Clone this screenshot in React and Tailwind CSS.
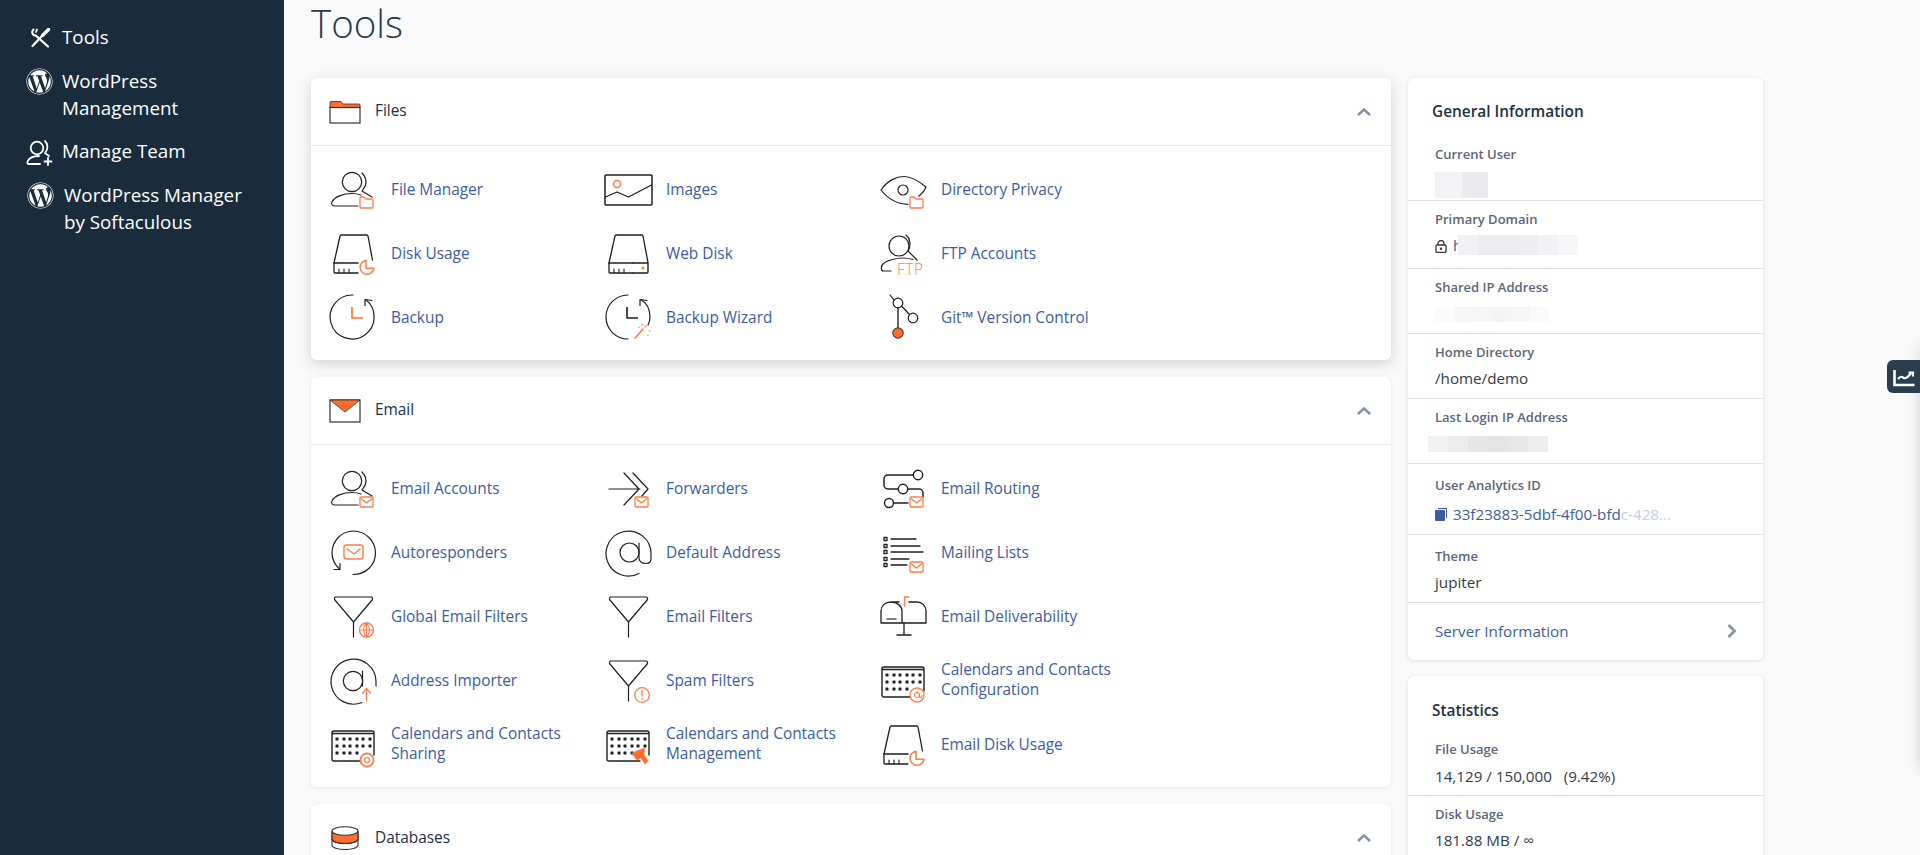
import React from "react";
import { FaWordpress } from "react-icons/fa";

const K = "#1f1f1f";
const O = "#ff7b47";
const S = "#ff6c2c";

const Ico = ({ children }) => (
  <svg viewBox="0 0 48 48" className="w-[48px] h-[48px] shrink-0 overflow-visible" fill="none" stroke={K} strokeWidth="1.2" strokeLinecap="round" strokeLinejoin="round">
    {children}
  </svg>
);

const Env = ({ x = 31, y = 32, w = 13, h = 10 }) => (
  <g stroke={O} strokeWidth="1.3">
    <rect x={x} y={y} width={w} height={h} rx="1.2" fill="#fff" />
    <path d={`M${x + 1.5} ${y + 2}l${w / 2 - 1.5} ${h / 2 - 1}l${w / 2 - 1.5} ${-(h / 2 - 1)}`} />
  </g>
);
const SmallFolder = ({ x = 31, y = 32 }) => (
  <path d={`M${x} ${y + 9}v-9a1 1 0 0 1 1-1h3l2 2h6a1 1 0 0 1 1 1v7a1 1 0 0 1-1 1h-11a1 1 0 0 1-1-1z`} stroke={O} strokeWidth="1.3" fill="#fff" />
);
const Person = () => (
  <g>
    <circle cx="23" cy="16" r="9.700" />
    <path d="M33 7c3.500 3.500 4.500 8.500 3.500 12-.5 2-2 3.500-3.500 6l10 6" />
    <path d="M29 40H6c-3 0-4-2-3-4 2-5 11-8.500 20-8.500 3 0 6 .4 9 1.500" />
  </g>
);
const Disk = ({ pie }) => (
  <g>
    <path d="M12 5h26l1 1 4.500 24M12 5l-1 1-6 27v9a1 1 0 0 0 1 1h23" strokeWidth="1.300" />
    <path d="M5 33h24" strokeWidth="1.500" />
    <path d="M10 43v-4M15 43v-4M20 43v-4" strokeWidth="1.100" />
    {pie ? (
      <path d="M37 30.300a7 7 0 1 0 8 8h-8z" fill="#fff" stroke={O} strokeWidth="1.500" />
    ) : (
      <g>
        <path d="M29 33h15v9a1 1 0 0 1-1 1H29M43.500 30l.5 3" strokeWidth="1.400" />
        <circle cx="39" cy="38" r="1.500" fill={O} stroke="none" />
      </g>
    )}
  </g>
);
const At = () => (
  <g>
    <path d="M35 44.500A22.500 22.500 0 1 1 47 23.500v6c0 3-2 5-5 5-4 0-7-2-7-6V14" />
    <circle cx="25.500" cy="23.500" r="9.500" />
  </g>
);
const Filter = () => <path d="M5.500 6.500a2 2 0 0 1 1-2.500h36a2 2 0 0 1 1 2.500L24.500 29l-19-22.500M24.500 29v15" />;
const Calendar = () => (
  <g>
    <path d="M3 12.500h42M5 10h38a2 2 0 0 1 2 2v22M36 40H5a2 2 0 0 1-2-2V12a2 2 0 0 1 2-2" strokeWidth="1.400" />
    {[18, 25, 32].map((y, r) =>
      [8, 15, 21, 28, 34, 41].slice(0, r === 2 ? 4 : 6).map((x) => <rect key={x + "-" + y} x={x - 1.500} y={y - 1.500} width="3" height="3" rx=".6" fill={K} stroke="none" />)
    )}
  </g>
);

const Icons = {
  file: () => <Ico><Person /><SmallFolder /></Ico>,
  images: () => (
    <Ico>
      <rect x="1" y="9" width="47" height="30" rx="1" strokeWidth="1.500" />
      <circle cx="13" cy="18" r="3.500" stroke={O} strokeWidth="1.500" />
      <path d="M1.500 31l11.500-5 11.500 5 23-12" strokeWidth="1.300" />
    </Ico>
  ),
  eye: () => (
    <Ico>
      <path d="M2 24C8 15 17 10.500 25 10.500S41 16 47 21M2 24c7 9 15 14 27 14.300M47 21l-2 4-5 5" />
      <circle cx="24" cy="24" r="5" />
      <SmallFolder x={31} y={32} />
    </Ico>
  ),
  disk: () => <Ico><Disk pie /></Ico>,
  webdisk: () => <Ico><Disk /></Ico>,
  ftp: () => (
    <Ico>
      <circle cx="20" cy="16" r="10" />
      <path d="M27 5c4 3 5.500 10 2 16l9 9" />
      <path d="M12 41H4.500C1.500 41 2 36 4 34c4-4 14-6 20-6 3.500 0 7 .5 10 1.500" />
      <text x="18" y="45" fontFamily="'Open Sans', sans-serif" fontWeight="300" fontSize="15.500" fill={O} stroke="none" letterSpacing=".5">FTP</text>
    </Ico>
  ),
  backup: () => (
    <Ico>
      <path d="M24 1A22 22 0 1 0 36.500 5.500" />
      <path d="M36 11.500V5.500l7 1" />
      <path d="M23 13v11h11" stroke={S} strokeWidth="1.600" strokeLinecap="butt" />
    </Ico>
  ),
  wizard: () => (
    <Ico>
      <path d="M24 1A22 22 0 0 0 24 45" />
      <path d="M36.500 5.500C43 9 46 15 46 23c0 3-.7 5.500-2 8" />
      <path d="M36 11.500V5.500l7 1" />
      <path d="M23 13v11h11" strokeWidth="1.600" strokeLinecap="butt" />
      <path d="M31 44l8-9" stroke={O} strokeWidth="1.600" />
      <path d="M41 33l1-1M38 30v1M45 37h1M44 41v.5M35 33v.5" stroke={O} strokeWidth="1.200" />
    </Ico>
  ),
  git: () => (
    <Ico>
      <path d="M11 1l4 5M22.500 12l8 8.500" />
      <path d="M19 14v20" stroke="#555" strokeWidth="1.800" />
      <circle cx="19" cy="9" r="4.800" />
      <circle cx="34" cy="24" r="4.800" />
      <circle cx="19" cy="39" r="5.200" fill={S} stroke="#444" />
    </Ico>
  ),
  accounts: () => <Ico><Person /><Env /></Ico>,
  forward: () => (
    <Ico>
      <path d="M5 24h31M20 8l15 16-15 16M29 8l15 16-6 7" />
      <Env />
    </Ico>
  ),
  routing: () => (
    <Ico>
      <path d="M34 10H9a4 4 0 0 0-4 4v6a4 4 0 0 0 4 4h10M29 24h11a4 4 0 0 1 4 4v4" strokeWidth="1.500" />
      <circle cx="39" cy="10" r="4.700" strokeWidth="1.400" />
      <circle cx="24" cy="24" r="4.700" strokeWidth="1.400" />
      <circle cx="10" cy="38" r="4.500" strokeWidth="1.400" />
      <path d="M14.500 38H29" strokeWidth="1.400" />
      <Env />
    </Ico>
  ),
  auto: () => (
    <Ico>
      <path d="M10.500 40C5.500 35.500 3 30 3 24 3 12 12.500 2 24.500 2S46.500 12 46.500 24 37 45.500 24 45.500" />
      <path d="M11 34.500v6H5" />
      <rect x="15" y="16" width="19" height="14" rx="2.500" stroke={O} strokeWidth="1.400" />
      <path d="M18 20l7 5 6-5" stroke={O} strokeWidth="1.400" />
    </Ico>
  ),
  at: () => <Ico><At /></Ico>,
  lists: () => (
    <Ico>
      {[10, 17, 23, 30, 36].map((y) => <rect key={y} x="5" y={y - 1.500} width="3" height="3" strokeWidth="1.300" />)}
      <path d="M12 10h25M12 17h29M12 23h32M12 30h18M12 36h16" strokeWidth="1.300" />
      <Env y={33} />
    </Ico>
  ),
  globalfilter: () => (
    <Ico>
      <Filter />
      <circle cx="37.500" cy="37" r="7" stroke={O} strokeWidth="1.300" fill="#fff" />
      <path d="M30.500 37h14M37.500 30v14M37.500 30c-4 4-4 10 0 14M37.500 30c4 4 4 10 0 14" stroke={O} strokeWidth="1.100" />
    </Ico>
  ),
  filter: () => <Ico><Filter /></Ico>,
  deliver: () => (
    <Ico>
      <path d="M2 30V18c0-5 4-9 10-9 6 0 11 4 11 9v12M2 30h45V18c0-5-4-9-9-9h-8M12 9h8" strokeWidth="1.300" />
      <path d="M8 26h9" stroke="#555" strokeWidth="1.500" />
      <path d="M25 30v12M18 42h14" strokeWidth="1.300" />
      <path d="M25.500 13V4h4" stroke={O} strokeWidth="1.400" />
    </Ico>
  ),
  calcfg: () => (
    <Ico>
      <Calendar />
      <circle cx="38" cy="38" r="7" stroke={O} strokeWidth="1.300" fill="#fff" />
      <path d="M40.500 38a2.500 2.500 0 1 1 0-.1v1.500c0 1.500 2.500 1.500 2.500-1" stroke={O} strokeWidth="1.100" />
    </Ico>
  ),
  importer: () => (
    <Ico>
      <path d="M33 45.500A22.500 22.500 0 1 1 47 24v5" />
      <circle cx="24" cy="24" r="9.700" />
      <path d="M33.500 14v15" />
      <path d="M37.500 44V32M33.500 36l4-4.500 4 4.500" stroke={O} strokeWidth="1.200" />
    </Ico>
  ),
  spam: () => (
    <Ico>
      <Filter />
      <circle cx="38" cy="38" r="7.300" stroke={O} strokeWidth="1.300" fill="#fff" />
      <path d="M38 33.500v5.500M38 41.500v.8" stroke={O} strokeWidth="1.300" />
    </Ico>
  ),
  calshare: () => (
    <Ico>
      <Calendar />
      <circle cx="38" cy="39" r="6.500" stroke={O} strokeWidth="1.800" strokeDasharray="3 1.200" fill="#fff" />
      <circle cx="38" cy="39" r="2.500" stroke={O} strokeWidth="1.200" />
    </Ico>
  ),
  calman: () => (
    <Ico>
      <Calendar />
      <path d="M28 32l12.500-5-.5 7 4 6-3 3-4-6-4 2z" fill={S} stroke={S} strokeWidth=".6" />
    </Ico>
  ),
};

const HeadFolder = () => (
  <svg viewBox="0 0 32 24" className="w-[32px] h-[24px]" fill="none">
    <path d="M1 5V2.500a1 1 0 0 1 1-1h10l2 2.500h16a1 1 0 0 1 1 1V8H1z" fill={S} stroke="#333" strokeWidth=".8" />
    <rect x="1" y="7.500" width="30" height="15.500" fill="#fff" stroke="#333" strokeWidth="1.200" />
  </svg>
);
const HeadMail = () => (
  <svg viewBox="0 0 32 24" className="w-[32px] h-[24px]" fill="none">
    <rect x="1" y="1" width="30" height="22" fill="#fff" stroke="#333" strokeWidth="1.200" />
    <path d="M1 1h30L16 13z" fill={S} stroke="#333" strokeWidth=".8" />
  </svg>
);
const HeadDb = () => (
  <svg viewBox="0 0 32 24" className="w-[32px] h-[24px]" fill="none" stroke="#333" strokeWidth="1.100">
    <path d="M3 5v14c0 2.500 5.500 4.500 13 4.500S29 21.500 29 19V5" fill="#fff" />
    <path d="M3 7v6c0 2.500 5.500 4.500 13 4.500S29 15.500 29 13V7z" fill={S} />
    <path d="M3 13c0 2.500 5.500 4.500 13 4.500S29 15.500 29 13" />
    <ellipse cx="16" cy="5" rx="13" ry="4.300" fill="#fff" />
  </svg>
);

const Item = ({ icon, label }) => {
  const I = Icons[icon];
  const two = label.length > 24;
  return (
    <a className="flex items-center h-[64px] w-[275px] gap-[14px]">
      <I />
      <span className={`text-[15.400px] leading-[20px] text-[#3d5da3] w-[200px] ${two ? "mb-[2px]" : ""}`}>{label}</span>
    </a>
  );
};

const Card = ({ head, title, items, big }) => (
  <section className={`bg-white rounded-[6px] ${big ? "shadow-[0_4px_14px_rgba(60,75,95,0.22)]" : "shadow-[0_1px_4px_rgba(60,75,95,0.1)]"}`}>
    <header className={`h-[68px] flex items-center pl-[18px] pr-[20px] ${items ? "border-b border-[#e6eaef]" : ""}`}>
      <span className="w-[46px]">{head}</span>
      <h2 className="text-[15.400px] text-[#1b3148] font-normal flex-1 mb-[1px]">{title}</h2>
      <svg viewBox="0 0 14 8" className="w-[14px] h-[8px]" fill="none" stroke="#8391a6" strokeWidth="2.400"><path d="M1 7l6-5.500L13 7" /></svg>
    </header>
    {items && (
      <div className="grid grid-cols-[275px_275px_275px] pl-[18px] pt-[12px] pb-[10px]">
        {items.map((it) => <Item key={it[1]} icon={it[0]} label={it[1]} />)}
      </div>
    )}
  </section>
);

const Row = ({ label, h, pt = 8, children }) => (
  <div className="px-[27px] border-b border-[#e0e1e6]" style={{ height: h, paddingTop: pt }}>
    <div className="text-[13px] font-semibold leading-[20px] text-[#5c6679]">{label}</div>
    <div className="text-[15.200px] leading-[20px] mt-[6px] text-[#333c48] whitespace-nowrap">{children}</div>
  </div>
);

const Blur = ({ h, tones, cell = 20, ml = 0 }) => (
  <div className="flex" style={{ height: h, marginLeft: ml }}>
    {tones.map((c, i) => <div key={i} style={{ width: cell, backgroundColor: c }} />)}
  </div>
);

const files = [["file", "File Manager"], ["images", "Images"], ["eye", "Directory Privacy"], ["disk", "Disk Usage"], ["webdisk", "Web Disk"], ["ftp", "FTP Accounts"], ["backup", "Backup"], ["wizard", "Backup Wizard"], ["git", "Git™ Version Control"]];
const email = [["accounts", "Email Accounts"], ["forward", "Forwarders"], ["routing", "Email Routing"], ["auto", "Autoresponders"], ["at", "Default Address"], ["lists", "Mailing Lists"], ["globalfilter", "Global Email Filters"], ["filter", "Email Filters"], ["deliver", "Email Deliverability"], ["importer", "Address Importer"], ["spam", "Spam Filters"], ["calcfg", "Calendars and Contacts Configuration"], ["calshare", "Calendars and Contacts Sharing"], ["calman", "Calendars and Contacts Management"], ["disk", "Email Disk Usage"]];

const SideItem = ({ icon, children, ml = 0, gap }) => (
  <div className="flex items-start text-[18.800px] leading-[26.500px] text-white" style={{ marginLeft: ml, gap }}>
    <span className="w-[27px] h-[27px] shrink-0 flex items-center justify-center">{icon}</span>
    <span>{children}</span>
  </div>
);

export default function App() {
  return (
    <div className="relative flex h-[855px] overflow-hidden bg-[#fafafa] font-['Open_Sans',sans-serif]">
      <aside className="w-[284px] shrink-0 bg-[#1a2c3b] pt-[24px] pl-[26px] flex flex-col gap-[17px]">
        <SideItem gap={9} icon={
          <svg viewBox="0 0 20 20" className="w-[20px] h-[20px] ml-[3px]" fill="none" stroke="#fff" strokeWidth="2" strokeLinecap="round" strokeLinejoin="round">
            <path d="M1.500 18L11 8" strokeWidth="2.200" />
            <path d="M12 7l5.500-5.500" strokeWidth="3.400" />
            <path d="M2.500 1.500c-2 2-1.500 5 1 6l1-.2L17 18.500" strokeWidth="2.200" />
            <path d="M6 1.500L5 4" strokeWidth="1.800" />
          </svg>
        }>Tools</SideItem>
        <SideItem gap={9} icon={<FaWordpress className="text-[27px]" />}>WordPress<br />Management</SideItem>
        <SideItem gap={9} icon={
          <svg viewBox="0 0 27 27" className="w-[27px] h-[27px] overflow-visible" fill="none" stroke="#fff" strokeWidth="1.800" strokeLinecap="round">
            <circle cx="11" cy="10" r="6.300" />
            <path d="M19 3c3 3 3.500 8 0 12l4 3" />
            <path d="M14 26H3c-1.500 0-2-1.200-1.500-2.500C3 20 8 18 13 18" />
            <path d="M22 20v7M18.500 23.500h7" />
          </svg>
        }>Manage Team</SideItem>
        <SideItem ml={1} gap={10} icon={<FaWordpress className="text-[27px]" />}>WordPress Manager<br />by Softaculous</SideItem>
      </aside>

      <main className="flex-1 pl-[27px] min-w-0">
        <div className="h-[78px]">
          <h1 className="text-[38.500px] leading-[46px] font-light text-[#293a4a]">Tools</h1>
        </div>
        <div className="flex gap-[17px] items-start">
          <div className="w-[1080px] flex flex-col gap-[17px]">
            <Card big head={<HeadFolder />} title="Files" items={files} />
            <Card head={<HeadMail />} title="Email" items={email} />
            <Card head={<HeadDb />} title="Databases" />
          </div>
          <div className="w-[355px] flex flex-col gap-[16px]">
            <section className="bg-white rounded-[6px] shadow-[0_1px_4px_rgba(60,75,95,0.15)]">
              <h3 className="px-[24px] pt-[23px] h-[66px] text-[15.400px] font-semibold text-[#1b3148] leading-[22px]">General Information</h3>
              <div className="h-[57px] px-[27px] border-b border-[#e0e1e6]">
                <div className="text-[13px] font-semibold leading-[20px] text-[#5c6679]">Current User</div>
                <div className="mt-[8px]"><Blur h={26} cell={26.500} tones={["#f3f2f5", "#ebeaee"]} /></div>
              </div>
              <Row label="Primary Domain" h={68}>
                <div className="flex items-center text-[#3d5da3] h-[20px]">
                  <svg viewBox="0 0 12 13" className="w-[12px] h-[13px] mr-[6px] mt-[2px]" fill="none" stroke="#3a3a3a" strokeWidth="1.300"><rect x="1" y="5" width="10" height="7.500" rx="1" /><path d="M3 5V3.500a3 3 0 0 1 6 0V5" /><circle cx="6" cy="8.700" r=".6" fill="#3a3a3a" /></svg>
                  <span>h</span><Blur h={20} ml={-4} tones={["#f1f0f3", "#ecebee", "#ecebee", "#eeedf0", "#f2f1f3", "#f7f6f8"]} />
                </div>
              </Row>
              <Row label="Shared IP Address" h={65}><div className="pt-[4px]"><Blur h={15} cell={19} tones={["#fbfbfc", "#f7f7f9", "#f6f6f8", "#f4f4f6", "#f6f6f8", "#fafafc"]} /></div></Row>
              <Row label="Home Directory" h={65}>/home/demo</Row>
              <Row label="Last Login IP Address" h={65}><div className="pt-[3px]"><Blur h={16} ml={-7} tones={["#f1f1f2", "#ececed", "#e6e6e7", "#e5e5e6", "#e7e7e8", "#eeeeef"]} /></div></Row>
              <div className="h-[71px] px-[27px] pt-[11px] border-b border-[#e0e1e6]">
                <div className="text-[13px] font-semibold leading-[20px] text-[#5c6679]">User Analytics ID</div>
                <div className="mt-[9px] flex items-center text-[15.200px] leading-[20px] whitespace-nowrap">
                  <svg viewBox="0 0 12 13" className="w-[12px] h-[13px] mr-[6px]" fill="#3d5da3"><path d="M3 0h9v10h-1V1H3z" /><rect x="0" y="2" width="10" height="11" rx="1" /></svg>
                  <span className="text-[#3d5da3]">33f23883-5dbf-4f00-bfd</span><span className="text-[#c6cfe3]">c-428...</span>
                </div>
              </div>
              <Row label="Theme" h={68} pt={11}>jupiter</Row>
              <div className="h-[57px] px-[27px] flex items-center justify-between pr-[27px]">
                <span className="text-[15.200px] text-[#3d5da3] mb-[1px]">Server Information</span>
                <svg viewBox="0 0 9 14" className="w-[9px] h-[14px] mb-[2px]" fill="none" stroke="#8a93a8" strokeWidth="2.800"><path d="M1.500 1l6 6-6 6" /></svg>
              </div>
            </section>
            <section className="bg-white rounded-[6px] shadow-[0_1px_4px_rgba(60,75,95,0.15)]">
              <h3 className="px-[24px] pt-[24px] h-[63px] text-[15.400px] font-semibold text-[#1b3148] leading-[22px]">Statistics</h3>
              <div className="h-[57px] px-[27px] border-b border-[#e0e1e6]">
                <div className="text-[13px] font-semibold leading-[20px] text-[#5c6679]">File Usage</div>
                <div className="mt-[7px] text-[15.200px] leading-[20px] text-[#333c48]">14,129 / 150,000 &nbsp; (9.42%)</div>
              </div>
              <Row label="Disk Usage" h={65}>181.88 MB / ∞</Row>
            </section>
          </div>
        </div>
      </main>

      <div className="absolute left-full top-[345px] h-[425px] w-[20px] shadow-[0_0_14px_rgba(0,0,0,0.16)]" />
      <div className="absolute top-[360px] right-0 w-[33px] h-[33px] bg-[#2a3e50] rounded-l-[6px] flex items-center justify-center">
        <svg viewBox="0 0 24 24" className="w-[24px] h-[24px]" fill="none" stroke="#fff" strokeWidth="2.600"><path d="M2.500 5v15h20" strokeWidth="2.600" /><path d="M6 14c2-2.500 3-3 5-1.500s3 1 5-1l3-3M16.500 7.500H21v4" strokeWidth="2.200" /></svg>
      </div>
    </div>
  );
}
